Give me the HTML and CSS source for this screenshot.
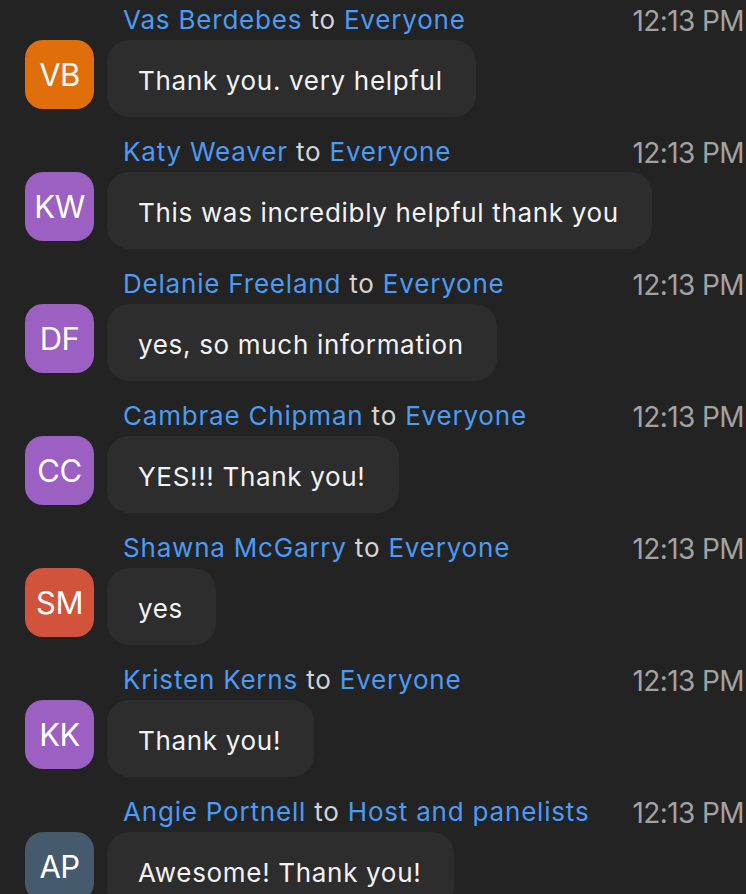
FILE: index.html
```html
<!DOCTYPE html>
<html>
<head>
<meta charset="utf-8">
<link rel="stylesheet" href="styles.css">
</head>
<body>
<div class="chat">
  <div class="msg">
    <div class="head"><span class="who"><span class="link">Vas Berdebes</span> to <span class="link">Everyone</span></span><span class="time">12:13 PM</span></div>
    <div class="row"><div class="avatar orange">VB</div><div class="bubble">Thank you. very helpful</div></div>
  </div>
  <div class="msg">
    <div class="head"><span class="who"><span class="link">Katy Weaver</span> to <span class="link">Everyone</span></span><span class="time">12:13 PM</span></div>
    <div class="row"><div class="avatar purple">KW</div><div class="bubble">This was incredibly helpful thank you</div></div>
  </div>
  <div class="msg">
    <div class="head"><span class="who"><span class="link">Delanie Freeland</span> to <span class="link">Everyone</span></span><span class="time">12:13 PM</span></div>
    <div class="row"><div class="avatar purple">DF</div><div class="bubble">yes, so much information</div></div>
  </div>
  <div class="msg">
    <div class="head"><span class="who"><span class="link">Cambrae Chipman</span> to <span class="link">Everyone</span></span><span class="time">12:13 PM</span></div>
    <div class="row"><div class="avatar purple">CC</div><div class="bubble">YES!!! Thank you!</div></div>
  </div>
  <div class="msg">
    <div class="head"><span class="who"><span class="link">Shawna McGarry</span> to <span class="link">Everyone</span></span><span class="time">12:13 PM</span></div>
    <div class="row"><div class="avatar red">SM</div><div class="bubble">yes</div></div>
  </div>
  <div class="msg">
    <div class="head"><span class="who"><span class="link">Kristen Kerns</span> to <span class="link">Everyone</span></span><span class="time">12:13 PM</span></div>
    <div class="row"><div class="avatar purple">KK</div><div class="bubble">Thank you!</div></div>
  </div>
  <div class="msg">
    <div class="head"><span class="who"><span class="link">Angie Portnell</span> to <span class="link">Host and panelists</span></span><span class="time">12:13 PM</span></div>
    <div class="row"><div class="avatar slate">AP</div><div class="bubble">Awesome! Thank you!</div></div>
  </div>
</div>
</body>
</html>
```
FILE: styles.css
```css
html, body {
  margin: 0;
  padding: 0;
  background: #232323;
  overflow: hidden;
}
.chat {
  display: flex;
  flex-direction: column;
  gap: 15px;
  font-family: "Inter", "Liberation Sans", sans-serif;
}
.msg {
  display: flex;
  flex-direction: column;
}
.head {
  height: 40px;
  box-sizing: border-box;
  padding-bottom: 1px;
  display: flex;
  align-items: center;
  padding-left: 123px;
  padding-right: 2px;
  font-size: 26px;
  letter-spacing: 0.8px;
  color: #d4d4d4;
}
.who {
  flex: 1;
  white-space: nowrap;
}
.link {
  color: #4c9bf4;
}
.time {
  color: #a2a2a2;
  letter-spacing: -0.6px;
  font-size: 28px;
  position: relative;
  top: 1px;
}
.row {
  display: flex;
  align-items: flex-start;
  gap: 13px;
  padding-left: 25px;
}
.avatar {
  width: 69px;
  height: 69px;
  border-radius: 18px;
  display: flex;
  align-items: center;
  justify-content: center;
  color: #ffffff;
  font-size: 31px;
  letter-spacing: -0.5px;
}
.orange { background: #e06f0b; }
.purple { background: #9c5fc2; }
.red { background: #d2533b; }
.slate { background: #465a6d; }
.bubble {
  height: 77px;
  box-sizing: border-box;
  display: flex;
  align-items: center;
  padding: 3px 33px 0 31px;
  background: #2d2d2d;
  border-radius: 22px;
  color: #f2f2f2;
  font-size: 26px;
  letter-spacing: 0.68px;
  white-space: nowrap;
}
```
